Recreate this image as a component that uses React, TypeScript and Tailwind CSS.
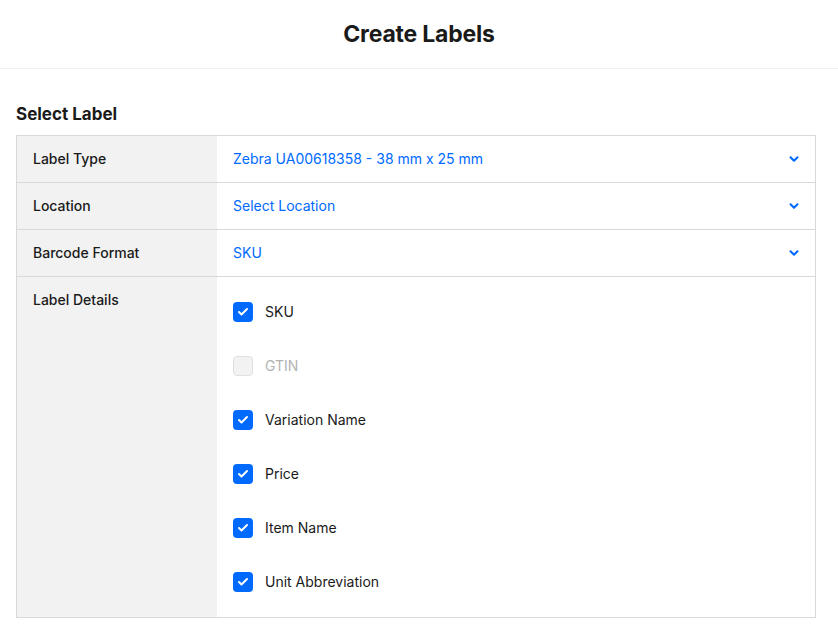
import { ChevronDown, Check } from "lucide-react";

const rows = [
  { label: "Label Type", value: "Zebra UA00618358 - 38 mm x 25 mm" },
  { label: "Location", value: "Select Location" },
  { label: "Barcode Format", value: "SKU" },
];

const details = [
  { name: "SKU", checked: true },
  { name: "GTIN", checked: false, disabled: true },
  { name: "Variation Name", checked: true },
  { name: "Price", checked: true },
  { name: "Item Name", checked: true },
  { name: "Unit Abbreviation", checked: true },
];

export default function App() {
  return (
    <div className="min-h-screen bg-white text-[#1a1a1a] font-['Inter',sans-serif]">
      {/* Header */}
      <header className="h-[69px] border-b border-[#f0f0f0] flex items-center justify-center">
        <h1 className="text-[23px] font-bold tracking-[-0.2px]">Create Labels</h1>
      </header>

      <main className="px-4 pt-[33px]">
        <h2 className="text-[17px] font-bold mb-[9px] leading-[24px]">Select Label</h2>

        <div className="w-[800px] border border-[#d9d9d9]">
          {rows.map((r) => (
            <div key={r.label} className="flex h-[47px] border-b border-[#d9d9d9] text-sm">
              <div className="w-[200px] shrink-0 bg-[#f2f2f2] px-4 flex items-center font-medium">
                {r.label}
              </div>
              <div className="flex-1 flex items-center justify-between pl-4 pr-[14px] text-[#006aff]">
                <span>{r.value}</span>
                <ChevronDown className="w-[14px] h-[14px]" strokeWidth={3.5} />
              </div>
            </div>
          ))}

          <div className="flex text-sm">
            <div className="w-[200px] shrink-0 bg-[#f2f2f2] px-4 pt-[13px] font-medium">
              Label Details
            </div>
            <div className="flex-1 pl-4 pt-[8px] pb-[8px]">
              {details.map((d) => (
                <div key={d.name} className="h-[54px] flex items-center gap-3">
                  {d.checked ? (
                    <span className="w-5 h-5 rounded-[4px] bg-[#006aff] flex items-center justify-center">
                      <Check className="w-3 h-3 text-white" strokeWidth={4} />
                    </span>
                  ) : (
                    <span className="w-5 h-5 rounded-[4px] bg-[#f2f2f2] border border-[#e0e0e0]" />
                  )}
                  <span className={d.disabled ? "text-[#b3b3b3]" : "text-[#1a1a1a]"}>{d.name}</span>
                </div>
              ))}
            </div>
          </div>
        </div>
      </main>
    </div>
  );
}
